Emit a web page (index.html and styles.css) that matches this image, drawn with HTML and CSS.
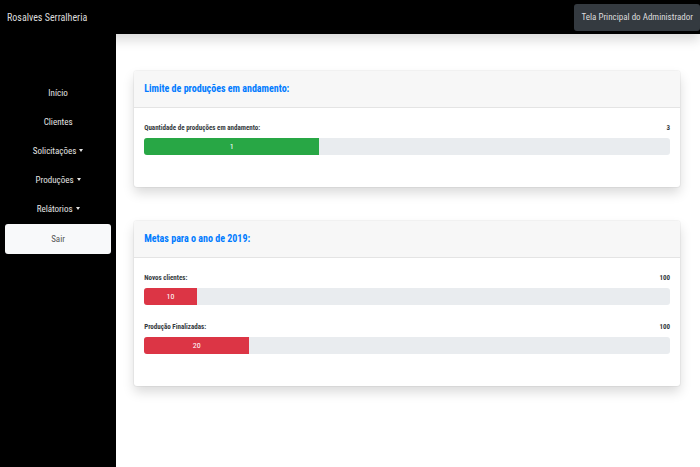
FILE: index.html
```html
<!DOCTYPE html>
<html lang="pt-BR">
<head>
<meta charset="utf-8">
<title>Rosalves Serralheria</title>
<link rel="stylesheet" href="styles.css">
</head>
<body>
<header class="topbar">
  <a class="brand" href="#">Rosalves Serralheria</a>
  <a class="home" href="#">Tela Principal do Administrador</a>
</header>
<div class="layout">
  <nav class="sidebar">
    <a class="item" href="#">Início</a>
    <a class="item" href="#">Clientes</a>
    <button class="item caret" type="button">Solicitações</button>
    <button class="item caret" type="button">Produções</button>
    <button class="item caret" type="button">Relátorios</button>
    <a class="item exit" href="#">Sair</a>
  </nav>
  <main class="content">
    <section class="card">
      <h2 class="card-title">Limite de produções em andamento:</h2>
      <div class="card-body">
        <div class="goal">
          <div class="goal-label"><span>Quantidade de produções em andamento:</span><span>3</span></div>
          <div class="track"><div class="bar green" style="width:33.33%">1</div></div>
        </div>
      </div>
    </section>
    <section class="card">
      <h2 class="card-title">Metas para o ano de 2019:</h2>
      <div class="card-body">
        <div class="goal">
          <div class="goal-label"><span>Novos clientes:</span><span>100</span></div>
          <div class="track"><div class="bar red" style="width:10%">10</div></div>
        </div>
        <div class="goal">
          <div class="goal-label"><span>Produção Finalizadas:</span><span>100</span></div>
          <div class="track"><div class="bar red" style="width:20%">20</div></div>
        </div>
      </div>
    </section>
  </main>
</div>
</body>
</html>
```
FILE: styles.css
```css
* { box-sizing: border-box; }
body {
  margin: 0;
  min-height: 100vh;
  display: flex;
  flex-direction: column;
  background: #fff;
  color: #343a40;
  font-family: "Roboto Condensed", Roboto, "Liberation Sans", sans-serif;
  font-size: 9px;
}
a { color: inherit; text-decoration: none; }
.topbar {
  position: relative;
  display: flex;
  align-items: center;
  justify-content: space-between;
  height: 34px;
  padding-left: 7px;
  background: #000;
  color: #dcdcdc;
  box-shadow: 0 6px 12px rgba(0, 0, 0, .15);
}
.brand { font-size: 10px; }
.home {
  padding: 0 7px;
  line-height: 27px;
  border-radius: 3px;
  background: #343a40;
}
.layout { display: flex; flex: 1; }
.sidebar {
  position: relative;
  display: flex;
  flex-direction: column;
  width: 16.6%;
  padding: 45px 5px 0;
  background: #000;
}
.item {
  height: 29px;
  padding: 0;
  border: 0;
  background: none;
  color: #e4e4e4;
  font: inherit;
  line-height: 29px;
  text-align: center;
}
.caret::after {
  content: "";
  display: inline-block;
  margin-left: 3px;
  vertical-align: 2px;
  border: 2px solid transparent;
  border-top: 3px solid currentColor;
  border-bottom: 0;
}
.exit {
  height: 30px;
  line-height: 30px;
  border-radius: 3px;
  background: #f8f9fa;
  color: #555;
}
.content {
  flex: 1;
  display: flex;
  flex-direction: column;
  gap: 34px;
  padding: 37px 20px 34px 18px;
}
.card {
  border-radius: 3px;
  background: #fff;
  box-shadow: 0 0 0 1px rgba(0, 0, 0, .04), 0 6px 12px rgba(0, 0, 0, .15);
}
.card-title {
  margin: 0;
  padding: 0 10px;
  border-bottom: 1px solid #e4e4e4;
  border-radius: 3px 3px 0 0;
  background: #f7f7f7;
  color: #007bff;
  font-size: 10px;
  line-height: 36px;
}
.card-body { padding: 12px 10px 18px; }
.goal { margin-bottom: 14px; }
.goal-label {
  display: flex;
  justify-content: space-between;
  margin-bottom: 2px;
  font-size: 7px;
  font-weight: bold;
  line-height: 16px;
}
.track {
  height: 17px;
  overflow: hidden;
  border-radius: 3px;
  background: #e9ecef;
}
.bar {
  color: #fff;
  font-size: 8px;
  line-height: 17px;
  text-align: center;
}
.green { background: #28a745; }
.red { background: #dc3545; }
```
